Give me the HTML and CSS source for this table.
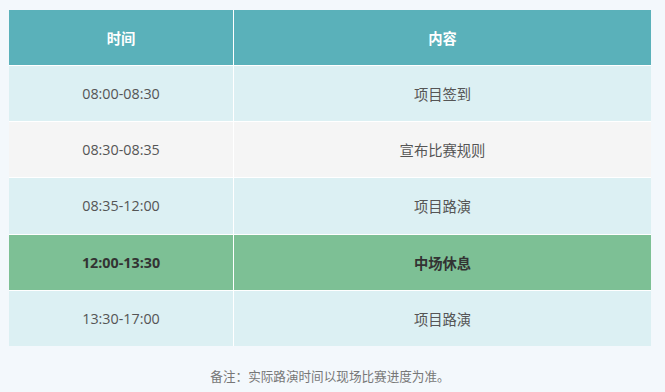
FILE: index.html
```html
<!DOCTYPE html>
<html lang="zh-CN">
<head>
<meta charset="utf-8">
<title>日程</title>
<link rel="stylesheet" href="styles.css">
</head>
<body>
<div class="page">
  <table class="schedule">
    <thead>
      <tr><th class="col-time">时间</th><th>内容</th></tr>
    </thead>
    <tbody>
      <tr class="row-light"><td>08:00-08:30</td><td>项目签到</td></tr>
      <tr class="row-gray"><td>08:30-08:35</td><td>宣布比赛规则</td></tr>
      <tr class="row-light"><td>08:35-12:00</td><td>项目路演</td></tr>
      <tr class="row-break"><td>12:00-13:30</td><td>中场休息</td></tr>
      <tr class="row-light"><td>13:30-17:00</td><td>项目路演</td></tr>
    </tbody>
  </table>
  <p class="note">备注：实际路演时间以现场比赛进度为准。</p>
</div>
</body>
</html>
```
FILE: styles.css
```css
html, body {
  margin: 0;
  padding: 0;
  background: #f3f8fc;
}
body {
  font-family: "Open Sans", "Noto Sans CJK SC", sans-serif;
  color: #555;
}
.page {
  padding: 10px 14px 0 9px;
}
.schedule {
  width: 642px;
  border-collapse: collapse;
  table-layout: fixed;
  border-style: hidden;
}
.schedule th, .schedule td {
  border: 1px solid #ffffff;
  text-align: center;
  padding: 0;
  font-size: 14.3px;
}
.schedule th {
  background: #5ab1ba;
  color: #ffffff;
  font-weight: bold;
  height: 55px;
}
.col-time {
  width: 224px;
}
.schedule td {
  height: 55.2px;
}
.row-light td { background: #dcf0f3; }
.row-gray td { background: #f5f5f5; }
.row-break td {
  background: #7dc095;
  color: #333;
  font-weight: bold;
}
.note {
  margin: 20px 0 0;
  text-align: center;
  font-size: 12.6px;
  color: #777;
}
```
